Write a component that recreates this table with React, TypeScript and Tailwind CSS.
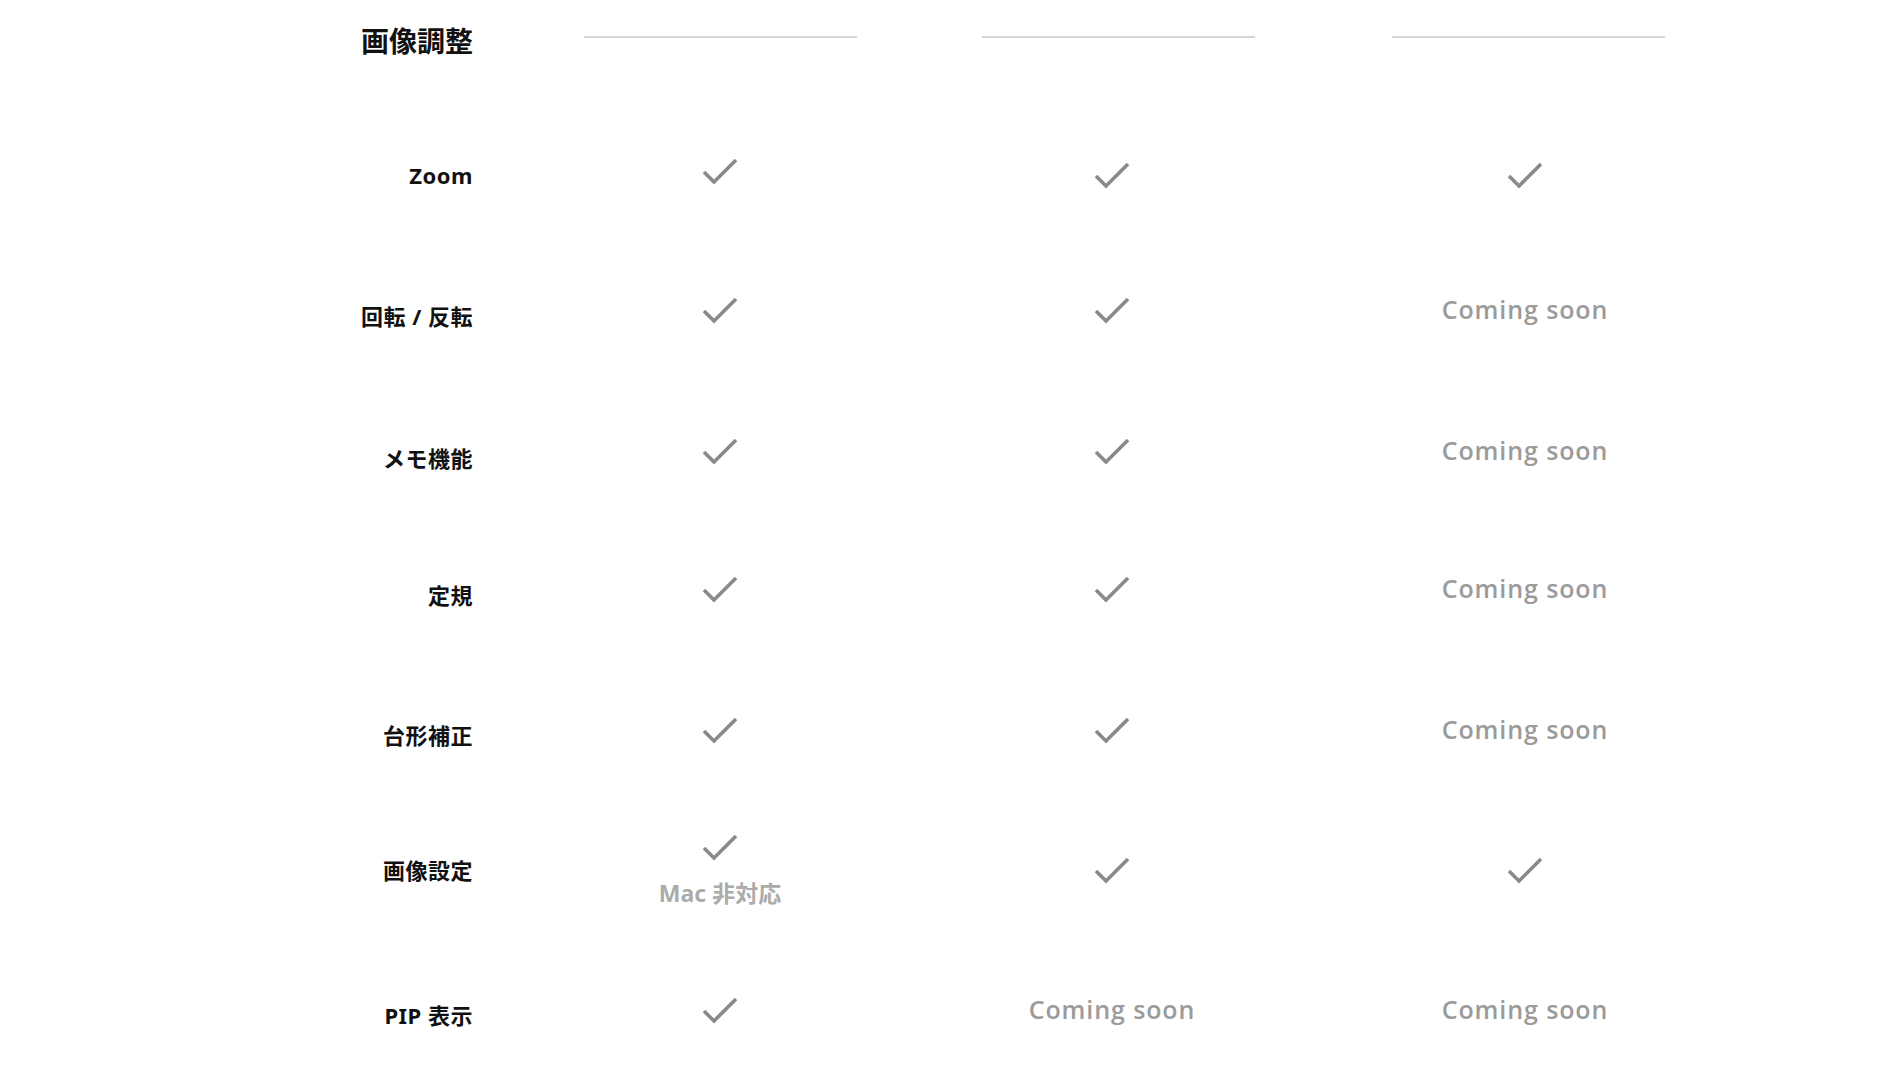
import React from "react";

type Cell = "check" | "soon" | "mac";

// label sits a little lower than the cell content in most rows
const rows: { label: string; h: string; shift: string; cells: Cell[] }[] = [
  { label: "Zoom", h: "h-[136px]", shift: "", cells: ["check", "check", "check"] },
  { label: "回転 / 反転", h: "h-[134px]", shift: "translate-y-[6px]", cells: ["check", "check", "soon"] },
  { label: "メモ機能", h: "h-[148px]", shift: "translate-y-[7px]", cells: ["check", "check", "soon"] },
  { label: "定規", h: "h-[128px]", shift: "translate-y-[6px]", cells: ["check", "check", "soon"] },
  { label: "台形補正", h: "h-[154px]", shift: "translate-y-[5px]", cells: ["check", "check", "soon"] },
  { label: "画像設定", h: "h-[126px]", shift: "", cells: ["mac", "check", "check"] },
  { label: "PIP 表示", h: "h-[154px]", shift: "translate-y-[5px]", cells: ["check", "soon", "soon"] },
];

const Check = () => (
  <svg width="36" height="28" viewBox="0 0 36 28" fill="none">
    <polyline points="2,15 12,25 34,3" stroke="#8a8a8a" strokeWidth="3.6" />
  </svg>
);

const CellContent = ({ type, raise }: { type: Cell; raise: boolean }) => {
  if (type === "soon") {
    return (
      <span className="font-['Open_Sans',sans-serif] text-[25px] font-semibold tracking-[0.9px] text-[#9b9b9b]">
        Coming soon
      </span>
    );
  }
  if (type === "mac") {
    return (
      <div className="flex flex-col items-center">
        <Check />
        <span className="mt-[18px] font-['Noto_Sans','Noto_Sans_CJK_JP',sans-serif] text-[23px] leading-[28px] font-bold text-[#ababab]">
          Mac 非対応
        </span>
      </div>
    );
  }
  return (
    <div className={raise ? "mb-[9px]" : ""}>
      <Check />
    </div>
  );
};

export default function App() {
  return (
    <div className="w-[1901px] h-[1069px] overflow-hidden bg-white">
      <div className="grid grid-cols-[521px_398px_386px_440px] h-[80px] items-center">
        <h2 className="pr-[48px] text-right font-['Noto_Sans_CJK_JP',sans-serif] text-[28px] font-bold text-[#111]">
          画像調整
        </h2>
        <div className="flex justify-center mb-[6px]">
          <div className="w-[273px] h-[2px] bg-[#d5d5d5]" />
        </div>
        <div className="flex justify-center mb-[6px] pl-[12px]">
          <div className="w-[273px] h-[2px] bg-[#d5d5d5]" />
        </div>
        <div className="flex justify-center mb-[6px] pl-[6px]">
          <div className="w-[273px] h-[2px] bg-[#d5d5d5]" />
        </div>
      </div>

      <div className="mt-[27px]">
        {rows.map((row, r) => (
          <div
            key={row.label}
            className={`grid grid-cols-[521px_398px_386px_440px] items-center ${row.h}`}
          >
            <div
              className={`pr-[48px] text-right font-['Noto_Sans','Noto_Sans_CJK_JP',sans-serif] text-[22px] tracking-[0.5px] font-bold text-[#111] ${row.shift}`}
            >
              {row.label}
            </div>
            {row.cells.map((c, i) => (
              <div key={i} className="flex justify-center items-center">
                <CellContent type={c} raise={r === 0 && i === 0} />
              </div>
            ))}
          </div>
        ))}
      </div>
    </div>
  );
}
